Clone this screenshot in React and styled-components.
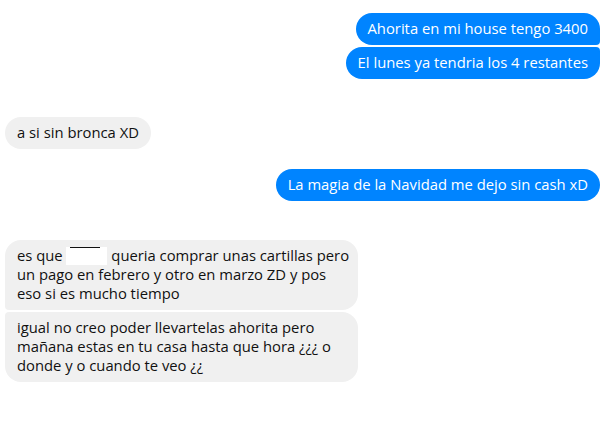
import React from "react";
import styled, { createGlobalStyle } from "styled-components";

const GlobalStyle = createGlobalStyle`
  body {
    margin: 0;
    background: #ffffff;
    font-family: "Open Sans", "Noto Sans", "Liberation Sans", sans-serif;
  }
`;

// each part is a list of lines; "[x]" marks the blanked-out name
const messages = [
  { from: "me", parts: [["Ahorita en mi house tengo 3400"], ["El lunes ya tendria los 4 restantes"]], gap: 13 },
  { from: "them", parts: [["a si sin bronca XD"]], gap: 38 },
  { from: "me", parts: [["La magia de la Navidad me dejo sin cash xD"]], gap: 20 },
  {
    from: "them",
    parts: [
      [
        "es que [x] queria comprar unas cartillas pero",
        "un pago en febrero y otro en marzo ZD y pos",
        "eso si es mucho tiempo",
      ],
      [
        "igual no creo poder llevartelas ahorita pero",
        "mañana estas en tu casa hasta que hora ¿¿¿ o",
        "donde y o cuando te veo ¿¿",
      ],
    ],
    gap: 39,
  },
];

function renderLine(line) {
  if (!line.includes("[x]")) return line;
  const [before, after] = line.split("[x]");
  return (
    <>
      {before}
      <Redacted />
      {after}
    </>
  );
}

function App() {
  return (
    <>
      <GlobalStyle />
      <Thread>
        {messages.map((group, i) => (
          <Group key={i} $mine={group.from === "me"} $gap={group.gap}>
            {group.parts.map((lines, j) => (
              <Bubble
                key={j}
                $mine={group.from === "me"}
                $first={j === 0}
                $last={j === group.parts.length - 1}
                $wrapped={lines.length > 1}
              >
                {lines.map((line, k) => (
                  <Line key={k}>{renderLine(line)}</Line>
                ))}
              </Bubble>
            ))}
          </Group>
        ))}
      </Thread>
    </>
  );
}

const Thread = styled.div`
  display: flex;
  flex-direction: column;
  padding: 0 14px 0 5px;
`;

const Group = styled.div`
  display: flex;
  flex-direction: column;
  align-items: ${(p) => (p.$mine ? "flex-end" : "flex-start")};
  gap: 2px;
  margin-top: ${(p) => p.$gap}px;
`;

const Bubble = styled.div`
  box-sizing: border-box;
  max-width: 353px;
  width: ${(p) => (p.$wrapped ? "353px" : "auto")};
  padding: 6px 12px 7px;
  font-size: 14.8px;
  line-height: 19px;
  background: ${(p) => (p.$mine ? "#0084ff" : "#f0f0f0")};
  color: ${(p) => (p.$mine ? "#ffffff" : "#111111")};
  border-radius: 16px;
  ${(p) =>
    p.$mine
      ? `
    border-top-right-radius: ${p.$first ? 16 : 4}px;
    border-bottom-right-radius: ${p.$last ? 16 : 4}px;
  `
      : `
    border-top-left-radius: ${p.$first ? 16 : 4}px;
    border-bottom-left-radius: ${p.$last ? 16 : 4}px;
  `}
`;

const Line = styled.div`
  white-space: nowrap;
`;

const Redacted = styled.span`
  display: inline-block;
  width: 41px;
  height: 18px;
  vertical-align: -4px;
  background: linear-gradient(#111111, #111111) no-repeat 4px 0 / 30px 1px, #ffffff;
`;

export default App;
